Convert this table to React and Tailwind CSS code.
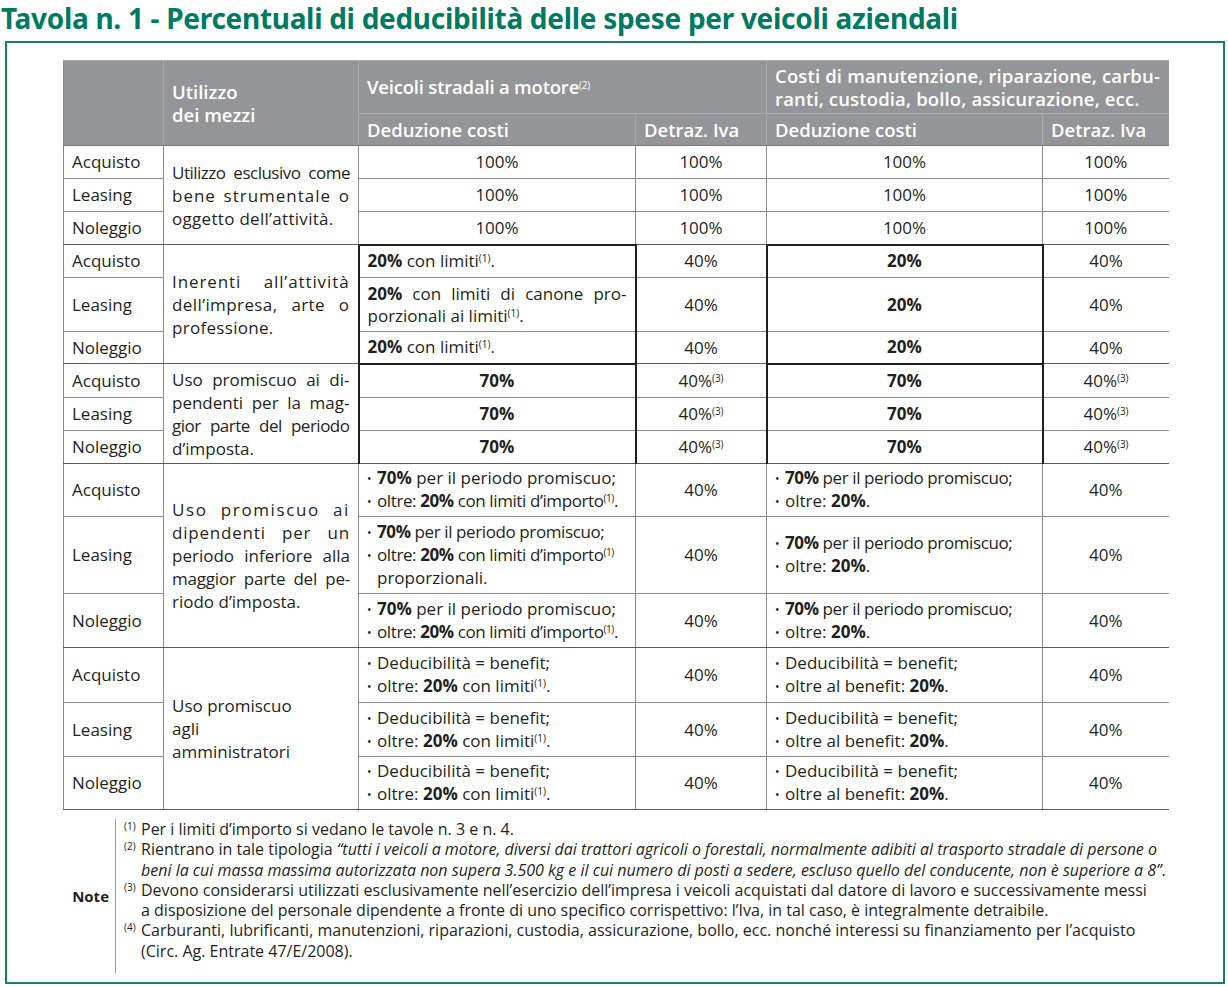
import React from "react";

const S = ({ children }) => (
  <sup className="text-[10px] font-normal">{children}</sup>
);

const B = ({ children }) => <span className="font-bold">{children}</span>;

const Bul = ({ children, tight }) => (
  <div className={"whitespace-nowrap " + (tight ? "tracking-[-0.4px]" : "")}>
    <span className="inline-block w-[10px] text-[12px] align-[1px]">•</span>
    {children}
  </div>
);

const J = ({ lines }) => (
  <div className="leading-[23px]">
    {lines.map((l, i) =>
      i < lines.length - 1 ? (
        <div key={i} className="whitespace-nowrap text-justify [text-align-last:justify]">
          {l}
        </div>
      ) : (
        <div key={i} className="whitespace-nowrap">
          {l}
        </div>
      )
    )}
  </div>
);

function Td({ className = "", children, ...rest }) {
  return (
    <td
      className={
        "border border-[#8c8c8c] px-[8px] py-0 align-middle " + className
      }
      {...rest}
    >
      {children}
    </td>
  );
}

const Sup = ({ children }) => (
  <span className="inline-block w-[17px] text-[10px] leading-none relative -top-[5px]">
    {children}
  </span>
);

export default function App() {
  const groups = [
    {
      heights: ["h-[33px]", "h-[33px]", "h-[33px]"],
      label: (
        <J
          lines={[
            <span className="tracking-[-0.5px] [word-spacing:-2px]">Utilizzo esclusivo come</span>,
            <span className="tracking-[1px]">bene strumentale o</span>,
            <span className="tracking-[0.3px]">oggetto dell’attività.</span>,
          ]}
        />
      ),
      rows: [
        ["100%", "100%", "100%", "100%"],
        ["100%", "100%", "100%", "100%"],
        ["100%", "100%", "100%", "100%"],
      ],
      c3: "center",
      c5: "center",
    },
    {
      heights: ["h-[33px]", "h-[54px]", "h-[32px]"],
      boxed: true,
      label: (
        <J
          lines={[
            <span className="tracking-[0.9px]">Inerenti all’attività</span>,
            <span className="tracking-[0.4px]">dell’impresa, arte o</span>,
            <span className="tracking-[0.3px]">professione.</span>,
          ]}
        />
      ),
      rows: [
        [
          <span>
            <B>20%</B> con limiti<S>(1)</S>.
          </span>,
          "40%",
          <B>20%</B>,
          "40%",
        ],
        [
          <div className="leading-[22px]">
            <div className="text-justify [text-align-last:justify] whitespace-nowrap">
              <B>20%</B> con limiti di canone pro-
            </div>
            <div>
              porzionali ai limiti<S>(1)</S>.
            </div>
          </div>,
          "40%",
          <B>20%</B>,
          "40%",
        ],
        [
          <span>
            <B>20%</B> con limiti<S>(1)</S>.
          </span>,
          "40%",
          <B>20%</B>,
          "40%",
        ],
      ],
      c3: "left",
      c5: "center",
    },
    {
      heights: ["h-[34px]", "h-[33px]", "h-[33px]"],
      boxed: true,
      label: (
        <J
          lines={[
            "Uso promiscuo ai di-",
            "pendenti per la mag-",
            <span className="tracking-[-0.5px] [word-spacing:-2px]">gior parte del periodo</span>,
            "d’imposta.",
          ]}
        />
      ),
      rows: [0, 1, 2].map(() => [
        <B>70%</B>,
        <span>
          40%<S>(3)</S>
        </span>,
        <B>70%</B>,
        <span>
          40%<S>(3)</S>
        </span>,
      ]),
      c3: "center",
      c5: "center",
    },
    {
      heights: ["h-[53px]", "h-[77px]", "h-[54px]"],
      label: (
        <J
          lines={[
            <span className="tracking-[1.6px]">Uso promiscuo ai</span>,
            <span className="tracking-[0.8px]">dipendenti per un</span>,
            "periodo inferiore alla",
            <span className="tracking-[-0.2px]">maggior parte del pe-</span>,
            "riodo d’imposta.",
          ]}
        />
      ),
      rows: [
        [
          <div>
            <Bul>
              <B>70%</B> per il periodo promiscuo;
            </Bul>
            <Bul tight>
              oltre: <B>20%</B> con limiti d’importo<S>(1)</S>.
            </Bul>
          </div>,
          "40%",
          <div>
            <Bul tight>
              <B>70%</B> per il periodo promiscuo;
            </Bul>
            <Bul>
              oltre: <B>20%</B>.
            </Bul>
          </div>,
          "40%",
        ],
        [
          <div>
            <Bul tight>
              <B>70%</B> per il periodo promiscuo;
            </Bul>
            <Bul tight>
              oltre: <B>20%</B> con limiti d’importo<S>(1)</S>
            </Bul>
            <div className="pl-[10px]">proporzionali.</div>
          </div>,
          "40%",
          <div>
            <Bul tight>
              <B>70%</B> per il periodo promiscuo;
            </Bul>
            <Bul>
              oltre: <B>20%</B>.
            </Bul>
          </div>,
          "40%",
        ],
        [
          <div>
            <Bul>
              <B>70%</B> per il periodo promiscuo;
            </Bul>
            <Bul tight>
              oltre: <B>20%</B> con limiti d’importo<S>(1)</S>.
            </Bul>
          </div>,
          "40%",
          <div>
            <Bul tight>
              <B>70%</B> per il periodo promiscuo;
            </Bul>
            <Bul>
              oltre: <B>20%</B>.
            </Bul>
          </div>,
          "40%",
        ],
      ],
      c3: "left",
      c5: "left",
    },
    {
      heights: ["h-[55px]", "h-[54px]", "h-[53px]"],
      label: (
        <div className="leading-[23px]">
          <div>Uso promiscuo</div>
          <div>agli</div>
          <div>amministratori</div>
        </div>
      ),
      rows: [0, 1, 2].map(() => [
        <div>
          <Bul>Deducibilità = benefit;</Bul>
          <Bul>
            oltre: <B>20%</B> con limiti<S>(1)</S>.
          </Bul>
        </div>,
        "40%",
        <div>
          <Bul>Deducibilità = benefit;</Bul>
          <Bul>
            oltre al benefit: <B>20%</B>.
          </Bul>
        </div>,
        "40%",
      ]),
      c3: "left",
      c5: "left",
    },
  ];

  const names = ["Acquisto", "Leasing", "Noleggio"];
  const hb = "border border-[#a9abad]";

  return (
    <div className="w-[1228px] h-[987px] bg-white font-['Open_Sans',sans-serif] text-[#231f20] overflow-hidden">
      <div className="h-[41px] pl-[1px]">
        <h1 className="font-['Noto_Sans',sans-serif] font-bold font-stretch-semi-condensed text-[28px] leading-[36px] text-[#007a62] tracking-[-0.3px] whitespace-nowrap">
          Tavola n. 1 - Percentuali di deducibilità delle spese per veicoli aziendali
        </h1>
      </div>
      <div className="ml-[5px] w-[1220px] h-[943px] border-2 border-[#16806a] pt-[17px] pl-[56px]">
        <table className="border-collapse table-fixed w-[1105px] text-[17px] leading-[22px]">
          <colgroup>
            <col className="w-[100px]" />
            <col className="w-[195px]" />
            <col className="w-[277px]" />
            <col className="w-[131px]" />
            <col className="w-[276px]" />
            <col className="w-[126px]" />
          </colgroup>
          <thead className="bg-[#939598] text-white font-semibold text-[18.5px]">
            <tr className="h-[53px]">
              <th rowSpan={2} className={hb + " border-l-[#8c8c8c] border-b-[#7a7a7a]"}></th>
              <th
                rowSpan={2}
                className={hb + " border-b-[#7a7a7a] text-left px-[8px] font-semibold leading-[23px]"}
              >
                Utilizzo
                <br />
                dei mezzi
              </th>
              <th colSpan={2} className={hb + " text-left px-[8px] font-semibold tracking-[-0.2px]"}>
                Veicoli stradali a motore<S>(2)</S>
              </th>
              <th
                colSpan={2}
                className={hb + " border-r-0 text-left px-[8px] font-semibold leading-[23px] tracking-[0.15px]"}
              >
                <div className="whitespace-nowrap">Costi di manutenzione, riparazione, carbu-</div>
                <div className="whitespace-nowrap">ranti, custodia, bollo, assicurazione, ecc.</div>
              </th>
            </tr>
            <tr className="h-[32px]">
              <th className={hb + " border-b-[#7a7a7a] text-left px-[8px] font-semibold"}>Deduzione costi</th>
              <th className={hb + " border-b-[#7a7a7a] text-left px-[8px] font-semibold"}>Detraz. Iva</th>
              <th className={hb + " border-b-[#7a7a7a] text-left px-[8px] font-semibold"}>Deduzione costi</th>
              <th className={hb + " border-b-[#7a7a7a] border-r-0 text-left px-[8px] font-semibold"}>Detraz. Iva</th>
            </tr>
          </thead>
          <tbody>
            {groups.map((g, gi) =>
              g.rows.map((r, ri) => {
                const lastRow = ri === 2;
                const sep = lastRow ? "border-b-[1.5px] border-b-[#5a5a5a]" : "";
                const boxCls = () => {
                  if (!g.boxed) return "";
                  let c = "border-x-2 border-x-[#1f1f1f] ";
                  if (ri === 0) c += "border-t-2 border-t-[#1f1f1f] ";
                  if (ri === 2) c += "border-b-2 border-b-[#1f1f1f] ";
                  return c;
                };
                return (
                  <tr key={gi + "-" + ri} className={g.heights[ri]}>
                    <Td className={"text-left " + sep}>{names[ri]}</Td>
                    {ri === 0 && (
                      <Td rowSpan={3} className="text-left border-b-[1.5px] border-b-[#5a5a5a]">
                        {g.label}
                      </Td>
                    )}
                    <Td
                      className={
                        sep + " " + (g.c3 === "center" ? "text-center " : "text-left ") + boxCls()
                      }
                    >
                      {r[0]}
                    </Td>
                    <Td className={"text-center " + sep}>{r[1]}</Td>
                    <Td
                      className={
                        sep + " " + (g.c5 === "center" ? "text-center " : "text-left ") + boxCls()
                      }
                    >
                      {r[2]}
                    </Td>
                    <Td className={"text-center border-r-0 " + sep}>{r[3]}</Td>
                  </tr>
                );
              })
            )}
          </tbody>
        </table>

        <div className="flex mt-[9px] text-[16px] leading-[20.3px]">
          <div className="w-[52px] flex items-center justify-end pr-[6px] font-bold text-[15px]">
            Note
          </div>
          <div className="border-l border-[#9a9a9a] pl-[8px] pb-[12px] pt-0">
            <div className="whitespace-nowrap">
              <Sup>(1)</Sup>
              Per i limiti d’importo si vedano le tavole n. 3 e n. 4.
            </div>
            <div className="whitespace-nowrap">
              <Sup>(2)</Sup>
              Rientrano in tale tipologia{" "}
              <i>
                “tutti i veicoli a motore, diversi dai trattori agricoli o forestali, normalmente adibiti al trasporto stradale di persone o
              </i>
            </div>
            <div className="whitespace-nowrap pl-[17px]">
              <i>
                beni la cui massa massima autorizzata non supera 3.500 kg e il cui numero di posti a sedere, escluso quello del conducente, non è superiore a 8”
              </i>
              .
            </div>
            <div className="whitespace-nowrap">
              <Sup>(3)</Sup>
              Devono considerarsi utilizzati esclusivamente nell’esercizio dell’impresa i veicoli acquistati dal datore di lavoro e successivamente messi
            </div>
            <div className="whitespace-nowrap pl-[17px]">
              a disposizione del personale dipendente a fronte di uno specifico corrispettivo: l’Iva, in tal caso, è integralmente detraibile.
            </div>
            <div className="whitespace-nowrap">
              <Sup>(4)</Sup>
              Carburanti, lubrificanti, manutenzioni, riparazioni, custodia, assicurazione, bollo, ecc. nonché interessi su finanziamento per l’acquisto
            </div>
            <div className="whitespace-nowrap pl-[17px]">(Circ. Ag. Entrate 47/E/2008).</div>
          </div>
        </div>
      </div>
    </div>
  );
}
